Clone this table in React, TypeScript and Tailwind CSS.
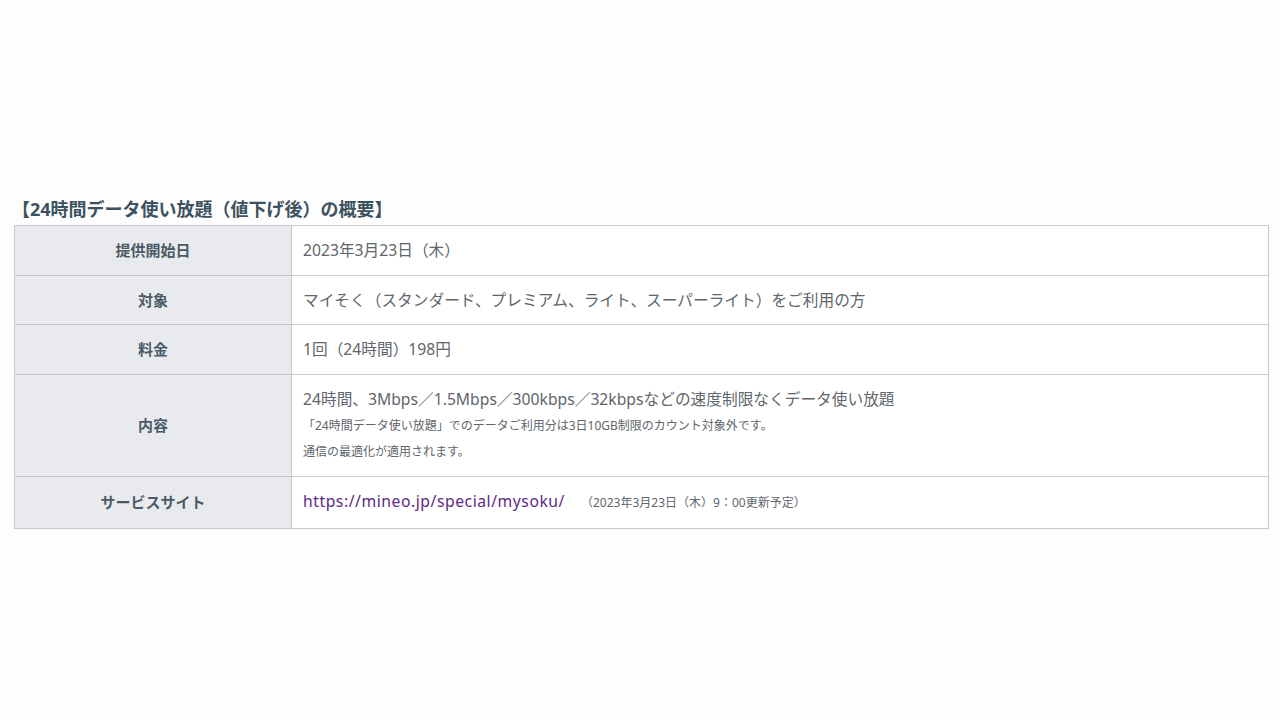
const font = { fontFamily: '"Noto Sans", "Noto Sans CJK JP", sans-serif' }

interface Row {
  label: string
  body: React.ReactNode
}

const rows: Row[] = [
  { label: '提供開始日', body: <p>2023年3月23日（木）</p> },
  {
    label: '対象',
    body: <p>マイそく（スタンダード、プレミアム、ライト、スーパーライト）をご利用の方</p>
  },
  { label: '料金', body: <p>1回（24時間）198円</p> },
  {
    label: '内容',
    body: (
      <>
        <p>24時間、3Mbps／1.5Mbps／300kbps／32kbpsなどの速度制限なくデータ使い放題</p>
        <p className="mt-[5px] text-[12px] leading-[20px]">
          「24時間データ使い放題」でのデータご利用分は3日10GB制限のカウント対象外です。
        </p>
        <p className="mb-[2px] mt-[6px] text-[12px] leading-[20px]">通信の最適化が適用されます。</p>
      </>
    )
  },
  {
    label: 'サービスサイト',
    body: (
      <p>
        <a href="#" className="tracking-[0.55px] text-[#5b2a86]">
          https://mineo.jp/special/mysoku/
        </a>
        <span className="ml-4 text-[12px]">（2023年3月23日（木）9：00更新予定）</span>
      </p>
    )
  }
]

export default function App() {
  return (
    <div className="flex h-[720px] w-[1280px] flex-col bg-[#fdfdfd] pt-[196px]" style={font}>
      <h2 className="ml-[12px] text-[18px] font-bold leading-[26px] text-[#3d5260]">
        【24時間データ使い放題（値下げ後）の概要】
      </h2>
      <table className="ml-[14px] mt-[3px] w-[1255px] border-collapse border border-[#c9c9cc]">
        <tbody>
          {rows.map((row) => (
            <tr key={row.label}>
              <th className="w-[277px] border border-[#c9c9cc] bg-[#e9eaee] py-3 text-center align-middle text-[15px] font-bold leading-[24.5px] text-[#4a5a66]">
                {row.label}
              </th>
              <td className="border border-[#c9c9cc] bg-white px-[11px] py-3 text-left align-top text-[15.7px] leading-[24.5px] text-[#60666b]">
                {row.body}
              </td>
            </tr>
          ))}
        </tbody>
      </table>
    </div>
  )
}
